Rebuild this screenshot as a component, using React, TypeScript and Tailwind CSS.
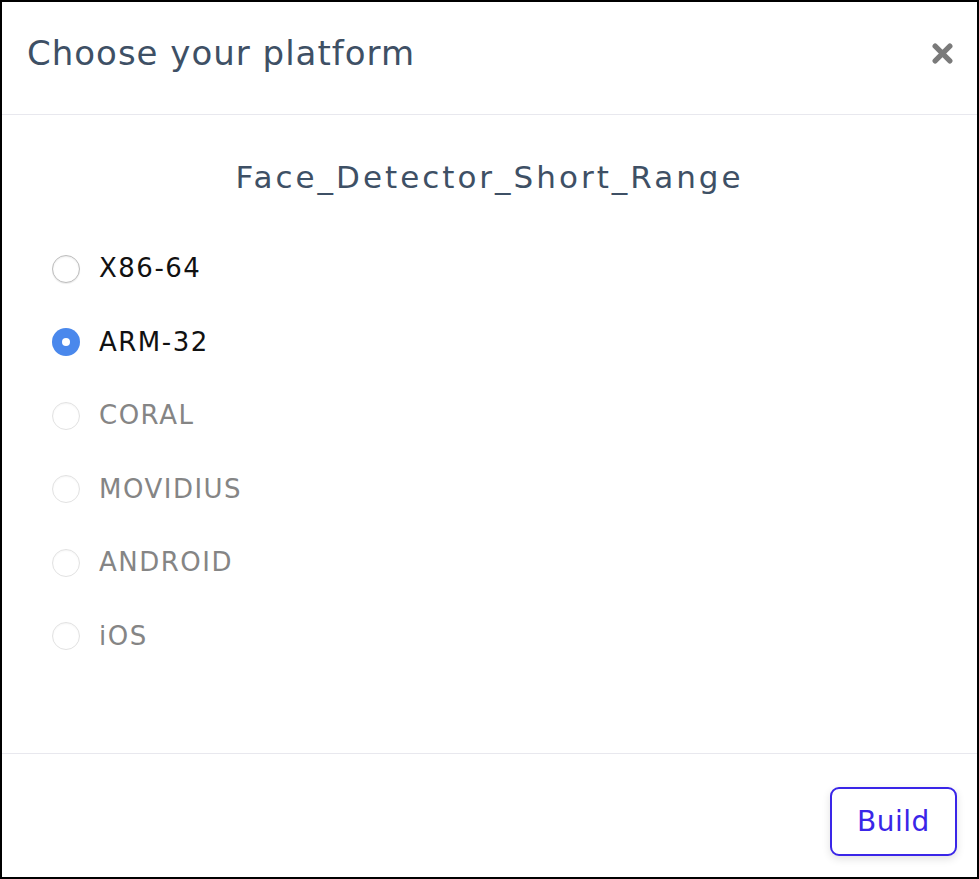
import { useState } from 'react';

const platforms = [
  { id: 'x86', label: 'X86-64', disabled: false },
  { id: 'arm', label: 'ARM-32', disabled: false },
  { id: 'coral', label: 'CORAL', disabled: true },
  { id: 'movidius', label: 'MOVIDIUS', disabled: true },
  { id: 'android', label: 'ANDROID', disabled: true },
  { id: 'ios', label: 'iOS', disabled: true },
];

const Radio = ({ checked, disabled }: { checked: boolean; disabled: boolean }) => {
  if (checked) {
    return (
      <span className="flex h-[28px] w-[28px] shrink-0 items-center justify-center rounded-full bg-[#4a88ec]">
        <span className="h-[8px] w-[8px] rounded-full bg-white" />
      </span>
    );
  }
  return (
    <span
      className={`block h-[28px] w-[28px] shrink-0 rounded-full border bg-white ${
        disabled
          ? 'border-[#e2e2e2] shadow-[inset_0_1px_2px_rgba(0,0,0,0.04)]'
          : 'border-[#bdbdbd] shadow-[inset_0_1px_2px_rgba(0,0,0,0.08),0_1px_1px_rgba(0,0,0,0.08)]'
      }`}
    />
  );
};

export default function App() {
  const [selected, setSelected] = useState('arm');

  return (
    <div
      className="flex h-[879px] w-[979px] flex-col border-2 border-black bg-white"
      style={{ fontFamily: '"DejaVu Sans", sans-serif' }}
    >
      {/* Header */}
      <div className="flex h-[113px] items-center justify-between border-b border-[#e8e8ee] pb-[10px] pl-[25px] pr-[24px]">
        <h1 className="text-[34px] font-normal tracking-[1px] text-[#3e5065]">Choose your platform</h1>
        <button className="text-[#7a7a7a]" aria-label="close">
          <svg width="21" height="21" viewBox="0 0 20 20">
            <path d="M3 3 L17 17 M17 3 L3 17" stroke="currentColor" strokeWidth="5" strokeLinecap="round" />
          </svg>
        </button>
      </div>

      {/* Body */}
      <div className="flex flex-1 flex-col border-b border-[#e8e8ee]">
        <h2 className="mt-[40px] text-center text-[31px] font-medium leading-[45px] tracking-[3px] text-[#3e5065]">
          Face_Detector_Short_Range
        </h2>
        <div className="mt-[54px] flex flex-col gap-[44.5px] pl-[50px]">
          {platforms.map((p) => (
            <label
              key={p.id}
              className={`flex h-[29px] items-center gap-[19px] ${p.disabled ? 'cursor-default' : 'cursor-pointer'}`}
              onClick={() => !p.disabled && setSelected(p.id)}
            >
              <Radio checked={selected === p.id} disabled={p.disabled} />
              <span
                className={`text-[26px] tracking-[1.5px] ${p.disabled ? 'text-[#858585]' : 'text-[#111111]'}`}
              >
                {p.label}
              </span>
            </label>
          ))}
        </div>
      </div>

      {/* Footer */}
      <div className="flex h-[123px] items-start justify-end pr-[20px] pt-[33px]">
        <button className="h-[69px] w-[127px] rounded-[9px] border-2 border-[#3a26e8] bg-white text-[28px] tracking-[0.5px] text-[#3a26e8] shadow-[0_3px_8px_rgba(0,0,0,0.12)]">
          Build
        </button>
      </div>
    </div>
  );
}
